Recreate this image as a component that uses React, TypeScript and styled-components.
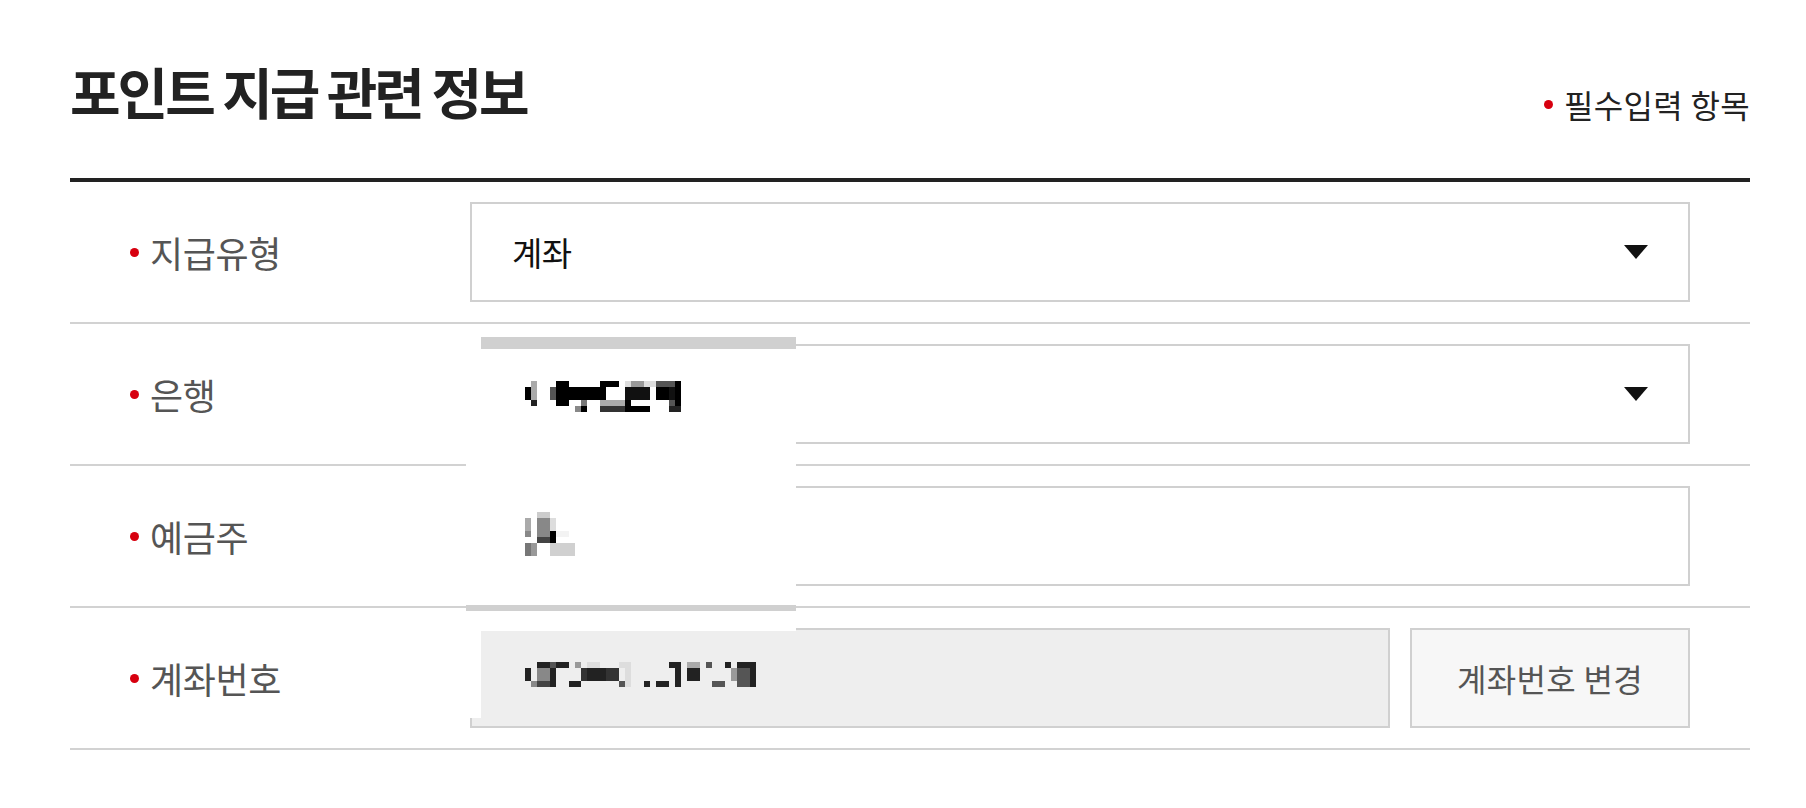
import React from "react";
import styled, { createGlobalStyle } from "styled-components";

const GlobalStyle = createGlobalStyle`
  html, body {
    margin: 0;
    padding: 0;
    background: #fff;
  }
  body {
    font-family: "Noto Sans CJK KR", "Noto Sans", sans-serif;
    color: #222;
  }
`;

const Section = styled.section`
  width: 1680px;
  margin-left: 70px;
  padding-top: 62px;
`;

const Header = styled.div`
  display: flex;
  justify-content: space-between;
  align-items: flex-end;
  padding-bottom: 60px;
`;

const Title = styled.h2`
  margin: 0;
  font-size: 55px;
  line-height: 56px;
  font-weight: 700;
  letter-spacing: -0.055em;
  color: #222;
`;

const RequiredNote = styled.p`
  margin: 0 0 -2px;
  font-size: 32px;
  line-height: 32px;
  color: #222;
  letter-spacing: 0.01em;
  display: flex;
  align-items: center;
`;

const Dot = styled.i<{ gap?: number }>`
  display: inline-block;
  width: 9px;
  height: 9px;
  border-radius: 50%;
  background: #d7000f;
  margin-right: ${(p) => p.gap ?? 11}px;
  flex-shrink: 0;
`;

const Table = styled.div`
  position: relative;
  border-top: 4px solid #222;
`;

const Row = styled.div`
  display: grid;
  grid-template-columns: 400px 1fr;
  border-bottom: 2px solid #d2d2d2;
`;

const Label = styled.div`
  display: flex;
  align-items: center;
  padding-left: 60px;
  font-size: 36px;
  letter-spacing: -0.01em;
  color: #555;
`;

const Field = styled.div`
  display: flex;
  gap: 20px;
  padding: 20px 60px 20px 0;
`;

const Box = styled.div<{ $muted?: boolean }>`
  box-sizing: border-box;
  flex: 1;
  height: 100px;
  display: flex;
  align-items: center;
  justify-content: space-between;
  padding: 0 40px 0 40px;
  border: 2px solid #d0d0d0;
  background: ${(p) => (p.$muted ? "#eeeeee" : "#fff")};
  font-size: 33px;
  letter-spacing: -0.02em;
  color: #111;
`;

const Arrow = styled.svg`
  width: 24px;
  height: 14px;
  display: block;
`;

const ChangeButton = styled.button`
  box-sizing: border-box;
  width: 280px;
  height: 100px;
  border: 2px solid #d0d0d0;
  background: #f7f7f7;
  font-family: "Noto Sans CJK KR", "Noto Sans", sans-serif;
  font-size: 32px;
  letter-spacing: 0.01em;
  color: #555;
  cursor: pointer;
`;

const Mask = styled.svg`
  position: absolute;
  left: 396px;
  top: 144px;
  width: 330px;
  height: 392px;
  display: block;
`;

type Rect = [number, number, number, number, string];

// mosaic blocks, page coordinates
const maskRects: Rect[] = [
  [466, 322, 330, 392, "#ffffff"],
  [481, 333, 315, 12, "#d0d0d0"],
  [466, 601, 330, 6, "#d0d0d0"],
  [481, 627, 315, 87, "#eeeeee"],
  // bank
  [531, 377, 6, 19, "#aaaaaa"],
  [525, 383, 6, 13, "#000000"],
  [531, 396, 6, 6, "#222222"],
  [550, 383, 6, 13, "#555555"],
  [556, 377, 13, 6, "#000000"],
  [556, 383, 50, 13, "#000000"],
  [556, 396, 13, 6, "#000000"],
  [581, 396, 6, 6, "#777777"],
  [575, 402, 6, 6, "#888888"],
  [581, 402, 6, 6, "#000000"],
  [600, 377, 19, 6, "#000000"],
  [600, 396, 25, 6, "#aaaaaa"],
  [600, 402, 25, 6, "#333333"],
  [625, 377, 6, 6, "#dddddd"],
  [631, 377, 13, 6, "#999999"],
  [644, 377, 12, 6, "#dddddd"],
  [656, 377, 19, 6, "#555555"],
  [675, 377, 6, 25, "#000000"],
  [625, 383, 25, 13, "#111111"],
  [625, 396, 6, 12, "#000000"],
  [631, 402, 19, 6, "#000000"],
  [656, 383, 13, 13, "#000000"],
  [669, 383, 6, 13, "#111111"],
  [669, 396, 6, 6, "#555555"],
  [669, 402, 12, 6, "#222222"],
  // holder
  [537, 508, 13, 6, "#cccccc"],
  [525, 514, 6, 13, "#aaaaaa"],
  [537, 514, 13, 19, "#888888"],
  [550, 514, 6, 13, "#dddddd"],
  [525, 527, 6, 6, "#888888"],
  [537, 533, 13, 6, "#444444"],
  [550, 527, 6, 12, "#000000"],
  [556, 527, 13, 6, "#f3f3f3"],
  [525, 539, 6, 13, "#777777"],
  [531, 539, 6, 13, "#999999"],
  [550, 539, 25, 13, "#d0d0d0"],
  // account number
  [525, 664, 6, 13, "#222222"],
  [537, 658, 13, 6, "#222222"],
  [550, 658, 6, 6, "#555555"],
  [556, 658, 13, 6, "#222222"],
  [537, 664, 13, 13, "#888888"],
  [550, 664, 6, 19, "#222222"],
  [531, 677, 6, 6, "#888888"],
  [537, 677, 13, 6, "#444444"],
  [569, 677, 12, 6, "#222222"],
  [575, 658, 6, 6, "#999999"],
  [587, 658, 13, 6, "#dddddd"],
  [581, 664, 6, 13, "#333333"],
  [587, 664, 19, 13, "#222222"],
  [606, 664, 13, 13, "#333333"],
  [619, 658, 6, 6, "#dddddd"],
  [619, 677, 6, 6, "#555555"],
  [625, 658, 6, 25, "#dddddd"],
  [644, 677, 6, 6, "#222222"],
  [656, 677, 13, 6, "#222222"],
  [669, 658, 12, 6, "#222222"],
  [675, 664, 6, 19, "#222222"],
  [687, 658, 13, 6, "#aaaaaa"],
  [687, 664, 13, 13, "#222222"],
  [706, 658, 6, 6, "#555555"],
  [712, 677, 13, 6, "#555555"],
  [725, 658, 6, 6, "#222222"],
  [731, 664, 6, 13, "#999999"],
  [737, 658, 13, 6, "#222222"],
  [737, 664, 13, 19, "#555555"],
  [750, 658, 6, 25, "#222222"],
];

const DownArrow = () => (
  <Arrow viewBox="0 0 24 14">
    <path d="M0 0 H24 L12 14 Z" fill="#111" />
  </Arrow>
);

const RequiredLabel = ({ children }: { children: React.ReactNode }) => (
  <Label>
    <Dot gap={11} />
    {children}
  </Label>
);

export default function App() {
  return (
    <>
      <GlobalStyle />
      <Section>
        <Header>
          <Title>포인트 지급 관련 정보</Title>
          <RequiredNote>
            <Dot />
            필수입력 항목
          </RequiredNote>
        </Header>
        <Table>
          <Row>
            <RequiredLabel>지급유형</RequiredLabel>
            <Field>
              <Box>
                계좌
                <DownArrow />
              </Box>
            </Field>
          </Row>
          <Row>
            <RequiredLabel>은행</RequiredLabel>
            <Field>
              <Box>
                <span />
                <DownArrow />
              </Box>
            </Field>
          </Row>
          <Row>
            <RequiredLabel>예금주</RequiredLabel>
            <Field>
              <Box />
            </Field>
          </Row>
          <Row>
            <RequiredLabel>계좌번호</RequiredLabel>
            <Field>
              <Box $muted />
              <ChangeButton type="button">계좌번호 변경</ChangeButton>
            </Field>
          </Row>
          <Mask viewBox="466 322 330 392">
            {maskRects.map(([x, y, w, h, c], i) => (
              <rect key={i} x={x} y={y} width={w} height={h} fill={c} />
            ))}
          </Mask>
        </Table>
      </Section>
    </>
  );
}
